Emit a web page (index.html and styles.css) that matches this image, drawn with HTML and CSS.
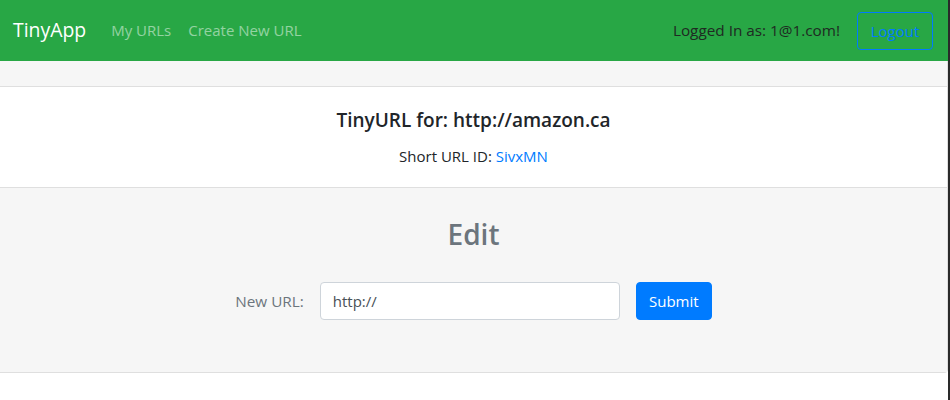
FILE: index.html
```html
<!DOCTYPE html>
<html>
<head>
<meta charset="utf-8">
<link rel="stylesheet" href="styles.css">
</head>
<body>
<nav class="navbar">
  <a class="brand" href="#">TinyApp</a>
  <a class="nav-link" href="#">My URLs</a>
  <a class="nav-link" href="#">Create New URL</a>
  <div class="nav-right">
    <span class="user">Logged In as: 1@1.com!</span>
    <button class="btn-outline">Logout</button>
  </div>
</nav>
<div class="card">
  <div class="card-header"></div>
  <div class="card-body">
    <h5 class="title">TinyURL for: http://amazon.ca</h5>
    <p class="short">Short URL ID: <a href="#">SivxMN</a></p>
  </div>
  <div class="card-footer">
    <h2 class="edit">Edit</h2>
    <form class="edit-form">
      <label class="label">New URL:</label>
      <input class="input" type="text" value="http://">
      <button class="btn-primary" type="button">Submit</button>
    </form>
  </div>
</div>
</body>
</html>
```
FILE: styles.css
```css
html, body {
  margin: 0;
  padding: 0;
}
body {
  width: 950px;
  height: 400px;
  box-sizing: border-box;
  border-right: 2px solid #2a2a2a;
  background: #fff;
  font-family: "Open Sans", "Noto Sans", sans-serif;
  font-size: 15px;
  color: #212529;
  overflow: hidden;
}
.navbar {
  height: 61px;
  background: #28a745;
  display: flex;
  align-items: center;
  padding: 0 15px 2px 13px;
  box-sizing: border-box;
}
.brand {
  color: #fff;
  font-size: 19.4px;
  text-decoration: none;
  margin-right: 25px;
}
.nav-link {
  color: rgba(255,255,255,0.5);
  text-decoration: none;
  margin-right: 17px;
}
.nav-right {
  margin-left: auto;
  display: flex;
  align-items: center;
  gap: 17px;
}
.user {
  color: #1f2a22;
  font-size: 15.3px;
}
.btn-outline {
  font-family: inherit;
  font-size: 15px;
  color: #007bff;
  background: transparent;
  border: 1px solid #007bff;
  border-radius: 4px;
  height: 38px;
  padding: 0 12px;
  width: 76px;
  margin-top: 2px;
}
.card {
  width: 948px;
  box-sizing: border-box;
  border-right: 1px solid #dfdfdf;
  border-bottom: 1px solid #dfdfdf;
  border-bottom-right-radius: 4px;
}
.card-header {
  height: 26px;
  box-sizing: border-box;
  background: #f6f6f6;
  border-bottom: 1px solid #dfdfdf;
}
.card-body {
  height: 101px;
  box-sizing: border-box;
  padding-top: 21px;
  text-align: center;
  border-bottom: 1px solid #dfdfdf;
}
.title {
  margin: 0 0 12px;
  font-size: 19px;
  font-weight: 600;
  line-height: 24px;
}
.short {
  margin: 0;
  line-height: 24px;
}
.short a {
  color: #007bff;
  text-decoration: none;
}
.card-footer {
  height: 184px;
  box-sizing: border-box;
  background: #f6f6f6;
  padding-top: 27px;
}
.edit {
  margin: 0;
  text-align: center;
  font-size: 28px;
  font-weight: 600;
  line-height: 38px;
  color: #6c757d;
}
.edit-form {
  margin-top: 29px;
  display: flex;
  justify-content: center;
  align-items: center;
}
.label {
  color: #6c757d;
  margin-right: 16px;
  font-size: 15.3px;
}
.input {
  width: 300px;
  height: 38px;
  box-sizing: border-box;
  border: 1px solid #ced4da;
  border-radius: 4px;
  padding: 0 12px;
  font-family: inherit;
  font-size: 15px;
  color: #495057;
  background: #fff;
  margin-right: 16px;
}
.btn-primary {
  font-family: inherit;
  font-size: 15px;
  color: #fff;
  background: #007bff;
  border: 1px solid #007bff;
  border-radius: 4px;
  height: 38px;
  width: 76px;
  padding: 0;
}
```
